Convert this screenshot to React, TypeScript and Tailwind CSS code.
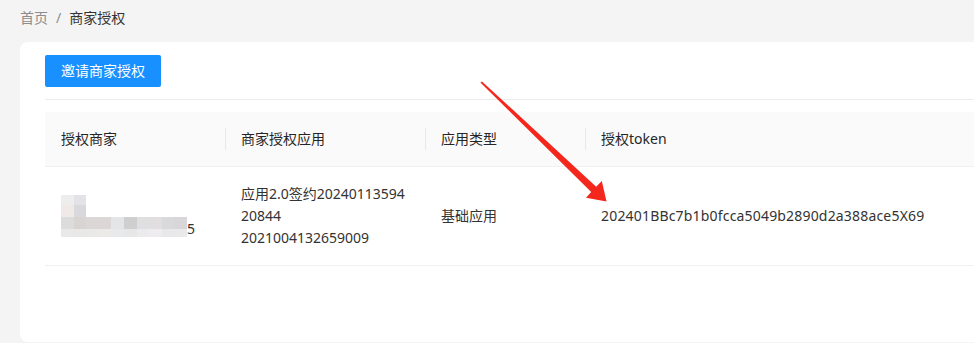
import React from 'react';

const blurRows: { h: string; cells: string[] }[] = [
  { h: 'h-[10px]', cells: ['bg-[#ededed]', 'bg-[#e3e3e7]'] },
  { h: 'h-[12px]', cells: ['bg-[#efeae8]', 'bg-[#d8d8dd]'] },
  {
    h: 'h-[12px]',
    cells: [
      'bg-[#dcdcdc]', 'bg-[#d7d4d2]', 'bg-[#dad7d6]', 'bg-[#dcd6d5]', 'bg-[#e3e5e6]',
      'bg-[#d0cfcf]', 'bg-[#dfdfe1]', 'bg-[#e2dddf]', 'bg-[#d9d9dc]', 'bg-[#d8d6d8]',
    ],
  },
  {
    h: 'h-[8px]',
    cells: [
      'bg-[#e9e9e9]', 'bg-[#e8e8e8]', 'bg-[#e9e9e8]', 'bg-[#ebeae8]', 'bg-[#e8e9ea]',
      'bg-[#e7e7e8]', 'bg-[#ebeaec]', 'bg-[#eeecee]', 'bg-[#e8e8ea]', 'bg-[#e9e9ea]',
    ],
  },
];

// pixelated (masked) merchant name
const BlurredName: React.FC = () => (
  <div className="flex items-end">
    <div className="flex flex-col">
      {blurRows.map((row, i) => (
        <div key={i} className={`flex ${row.h}`}>
          {row.cells.map((c, j) => (
            <div key={j} className={`w-[12.6px] ${c}`}></div>
          ))}
        </div>
      ))}
    </div>
    <span className="leading-[22px] -mb-[3px]">5</span>
  </div>
);

const HeadCell: React.FC<{ w: string; sep?: boolean; children: React.ReactNode }> = ({ w, sep, children }) => (
  <div className={`relative ${w} px-4 py-4 leading-[22px] shrink-0`}>
    {sep && <div className="absolute left-0 top-1/2 -translate-y-1/2 w-px h-[22px] bg-[#e8e8e8]"></div>}
    {children}
  </div>
);

export default function App() {
  return (
    <div className="relative w-[974px] h-[343px] overflow-hidden bg-[#f4f4f4] font-['Noto_Sans','Noto_Sans_CJK_SC',sans-serif] text-[14px]">
      {/* Breadcrumb */}
      <div className="pl-5 pt-[7px] leading-[22px] flex gap-2 text-[#8c8c8c]">
        <span>首页</span>
        <span>/</span>
        <span className="text-[#333]">商家授权</span>
      </div>

      {/* Card */}
      <div className="mt-[13px] ml-5 -mr-10 h-[300px] bg-white rounded-lg pl-[25px] pt-[13px]">
        <button className="h-8 px-4 bg-[#1890ff] text-white rounded-[2px] leading-8">邀请商家授权</button>
        <div className="mt-3 h-px bg-[#ececec]"></div>

        {/* Table */}
        <div className="mt-3 text-[#262626]">
          <div className="flex bg-[#fafafa] border-b border-[#f0f0f0]">
            <HeadCell w="w-[180px]">授权商家</HeadCell>
            <HeadCell w="w-[200px]" sep>商家授权应用</HeadCell>
            <HeadCell w="w-[160px]" sep>应用类型</HeadCell>
            <HeadCell w="flex-1" sep>授权token</HeadCell>
          </div>
          <div className="flex items-center border-b border-[#f0f0f0] text-[#333]">
            <div className="w-[180px] px-4 py-4 shrink-0">
              <BlurredName />
            </div>
            <div className="w-[200px] px-4 py-4 leading-[22px] shrink-0">
              <div>应用2.0签约20240113594</div>
              <div>20844</div>
              <div>2021004132659009</div>
            </div>
            <div className="w-[160px] px-4 py-4 leading-[22px] shrink-0">基础应用</div>
            <div className="flex-1 px-4 py-4 leading-[22px] tracking-[0.18px]">202401BBc7b1b0fcca5049b2890d2a388ace5X69</div>
          </div>
        </div>
      </div>

      {/* Red annotation arrow */}
      <svg className="absolute inset-0 pointer-events-none" width="974" height="343" viewBox="0 0 974 343">
        <polygon
          points="480.4,82.6 482,81.4 596.2,186.7 601.8,181 606.5,201.5 586,197.8 591.2,191.9"
          fill="#f4271c"
        />
      </svg>
    </div>
  );
}
